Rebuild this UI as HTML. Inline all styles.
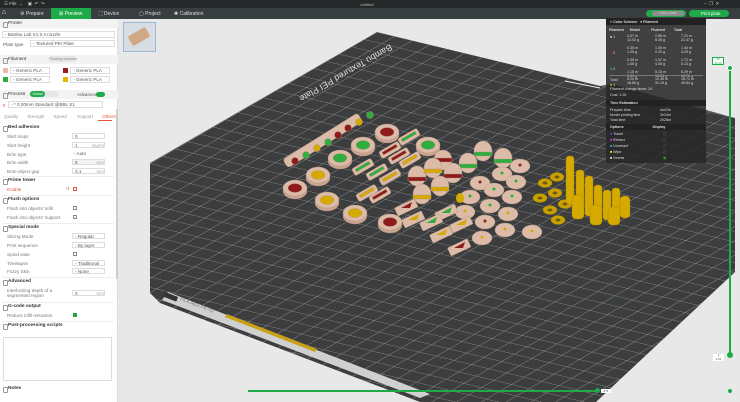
<!DOCTYPE html>
<html><head><meta charset="utf-8"><style>
*{margin:0;padding:0;box-sizing:border-box}
body{width:740px;height:402px;overflow:hidden;background:#e8e8e8;font-family:"Liberation Sans",sans-serif;position:relative}
.a{position:absolute;white-space:nowrap}
#lp{position:absolute;left:0;top:19px;width:118px;height:383px;background:#fff;border-right:1px solid #ddd;font-size:4.6px;color:#555}
.h{position:absolute;left:0;width:116px;font-weight:bold;color:#333;font-size:4.8px;padding-left:8px}
.h:before{content:"";position:absolute;left:2.5px;top:1px;width:3.5px;height:3.5px;border:0.5px solid #999;border-radius:1px}
.l{position:absolute;left:7px;color:#777}
.f{position:absolute;left:72px;width:33px;height:6px;border:0.5px solid #ddd;padding-left:2px;line-height:5.5px;color:#555}
.cb{position:absolute;left:73px;width:4px;height:4px;border:0.6px solid #888}
.sep{position:absolute;left:2px;width:112px;height:1px;background:#eee}
</style></head><body>
<div class="a" style="left:0;top:0;width:740px;height:8px;background:#26292a"></div>
<div class="a" style="left:4px;top:1px;font-size:4.5px;color:#ccc">☰ File &nbsp;⌄ &nbsp;&nbsp;&nbsp;▣ &nbsp;↶ &nbsp;↷</div>
<div class="a" style="left:360px;top:1.5px;font-size:4px;color:#bbb">Untitled</div>
<div class="a" style="left:704px;top:1px;font-size:4.5px;color:#ccc">–&nbsp;&nbsp;❐&nbsp;&nbsp;✕</div>
<div class="a" style="left:0;top:8px;width:740px;height:11px;background:#383e40"></div>
<div class="a" style="left:51px;top:8px;width:40px;height:11px;background:#1faa4a"></div>
<div class="a" style="left:2px;top:9px;font-size:7px;color:#eee">⌂</div>
<div class="a" style="left:20px;top:10.5px;font-size:5px;color:#ddd">⚙ Prepare</div>
<div class="a" style="left:59px;top:10.5px;font-size:5px;color:#fff">⊞ Preview</div>
<div class="a" style="left:99px;top:10.5px;font-size:5px;color:#ddd">⛶ Device</div>
<div class="a" style="left:139px;top:10.5px;font-size:5px;color:#ddd">▢ Project</div>
<div class="a" style="left:174px;top:10.5px;font-size:5px;color:#ddd">✺ Calibration</div>
<div class="a" style="left:646px;top:10px;width:40px;height:7px;background:#1faa4a;border-radius:4px"></div>
<div class="a" style="left:652px;top:11px;width:32px;height:5px;background:#8a8f8c;border-radius:3px;font-size:3.8px;color:#ccc;text-align:center;line-height:5px">Slice plate</div>
<div class="a" style="left:689px;top:10px;width:40px;height:7px;background:#1faa4a;border-radius:4px;font-size:4.3px;color:#fff;line-height:7px;padding-left:12px">Print plate</div>

<svg class="a" style="left:119px;top:19px" width="621" height="383" viewBox="119 19 621 383">
<defs>
<pattern id="g" width="1" height="1" patternUnits="userSpaceOnUse" patternTransform="matrix(17.5,4.2,-12.6,7.3,377,32)">
<path d="M0 0H1M0 0V1" stroke="#9a9a9a" stroke-width="0.06" fill="none"/>
</pattern>
<clipPath id="bc"><polygon points="377,32 600,86 612,84 735,118 735,272 596,402 420,402 160,303 150,293 150,163"/></clipPath>
</defs>
<polygon points="377,32 600,86 612,84 735,118 735,272 596,402 420,402 160,303 150,293 150,163" fill="#3c3d3e"/>
<rect x="119" y="19" width="621" height="383" fill="url(#g)" clip-path="url(#bc)"/>
<polygon points="162,300 420,398 430,394 168,292" fill="#cfd0d0"/>
<polygon points="227,314 317,349 315,352 225,317" fill="#c8a116"/>
<rect x="165" y="292" width="14" height="5" fill="#333" transform="rotate(21 165 292)"/>
<text x="180" y="300" font-size="5" fill="#777" transform="rotate(21 180 300)" font-style="italic">PLA ABS PETG</text>
<text x="0" y="0" font-size="9" fill="#ddd" transform="translate(390,44) rotate(150)">Bambu Textured PEI Plate</text>
<line x1="565" y1="81" x2="600" y2="88" stroke="#eee" stroke-width="1"/>
<g stroke="#b08f7c" stroke-width="0.4">
<g fill="#dcbca8">
<rect x="288" y="158" width="88" height="10" rx="3" transform="rotate(-32 288 168)"/>
</g>
<g>
<circle cx="295" cy="161" r="3.5" fill="#8e1b1b"/><circle cx="306" cy="155" r="3.5" fill="#2fae3f"/><circle cx="317" cy="148" r="3.5" fill="#d4aa00"/><circle cx="328" cy="142" r="3.5" fill="#2fae3f"/><circle cx="338" cy="135" r="3.5" fill="#8e1b1b"/><circle cx="348" cy="128" r="3.5" fill="#8e1b1b"/><circle cx="359" cy="122" r="3.5" fill="#d4aa00"/><circle cx="370" cy="115" r="3.5" fill="#2fae3f"/>
</g>
<g>
<ellipse cx="387" cy="135" rx="12" ry="8" fill="#c9a48f"/><ellipse cx="387" cy="132" rx="12" ry="8" fill="#dcbca8"/><ellipse cx="387" cy="132" rx="7" ry="4.5" fill="#8e1b1b"/>
<ellipse cx="363" cy="148" rx="12" ry="8" fill="#c9a48f"/><ellipse cx="363" cy="145" rx="12" ry="8" fill="#dcbca8"/><ellipse cx="363" cy="145" rx="7" ry="4.5" fill="#2fae3f"/>
<ellipse cx="428" cy="148" rx="12" ry="8" fill="#c9a48f"/><ellipse cx="428" cy="145" rx="12" ry="8" fill="#dcbca8"/><ellipse cx="428" cy="145" rx="7" ry="4.5" fill="#2fae3f"/>
<ellipse cx="340" cy="161" rx="12" ry="8" fill="#c9a48f"/><ellipse cx="340" cy="158" rx="12" ry="8" fill="#dcbca8"/><ellipse cx="340" cy="158" rx="7" ry="4.5" fill="#2fae3f"/>
<ellipse cx="318" cy="178" rx="12" ry="8" fill="#c9a48f"/><ellipse cx="318" cy="175" rx="12" ry="8" fill="#dcbca8"/><ellipse cx="318" cy="175" rx="7" ry="4.5" fill="#d4aa00"/>
<ellipse cx="295" cy="191" rx="12" ry="8" fill="#c9a48f"/><ellipse cx="295" cy="188" rx="12" ry="8" fill="#dcbca8"/><ellipse cx="295" cy="188" rx="7" ry="4.5" fill="#8e1b1b"/>
<ellipse cx="327" cy="203" rx="12" ry="8" fill="#c9a48f"/><ellipse cx="327" cy="200" rx="12" ry="8" fill="#dcbca8"/><ellipse cx="327" cy="200" rx="7" ry="4.5" fill="#d4aa00"/>
<ellipse cx="355" cy="216" rx="12" ry="8" fill="#c9a48f"/><ellipse cx="355" cy="213" rx="12" ry="8" fill="#dcbca8"/><ellipse cx="355" cy="213" rx="7" ry="4.5" fill="#d4aa00"/>
<ellipse cx="390" cy="225" rx="12" ry="8" fill="#c9a48f"/><ellipse cx="390" cy="222" rx="12" ry="8" fill="#dcbca8"/><ellipse cx="390" cy="222" rx="7" ry="4.5" fill="#8e1b1b"/>
</g>
<g>
<rect x="398" y="133" width="22" height="8" rx="2" fill="#dcbca8" transform="rotate(-30 409 137)"/><rect x="401" y="135" width="16" height="3" fill="#2fae3f" transform="rotate(-30 409 137)"/>
<rect x="379" y="146" width="22" height="8" rx="2" fill="#dcbca8" transform="rotate(-30 390 150)"/><rect x="382" y="148" width="16" height="3" fill="#8e1b1b" transform="rotate(-30 390 150)"/>
<rect x="388" y="152" width="22" height="8" rx="2" fill="#dcbca8" transform="rotate(-30 399 156)"/><rect x="391" y="154" width="16" height="3" fill="#8e1b1b" transform="rotate(-30 399 156)"/>
<rect x="399" y="156" width="22" height="8" rx="2" fill="#dcbca8" transform="rotate(-30 410 160)"/><rect x="402" y="158" width="16" height="3" fill="#d4aa00" transform="rotate(-30 410 160)"/>
<rect x="352" y="163" width="22" height="8" rx="2" fill="#dcbca8" transform="rotate(-30 363 167)"/><rect x="355" y="165" width="16" height="3" fill="#2fae3f" transform="rotate(-30 363 167)"/>
<rect x="366" y="168" width="22" height="8" rx="2" fill="#dcbca8" transform="rotate(-30 377 172)"/><rect x="369" y="170" width="16" height="3" fill="#2fae3f" transform="rotate(-30 377 172)"/>
<rect x="379" y="173" width="22" height="8" rx="2" fill="#dcbca8" transform="rotate(-30 390 177)"/><rect x="382" y="175" width="16" height="3" fill="#d4aa00" transform="rotate(-30 390 177)"/>
<rect x="356" y="189" width="22" height="8" rx="2" fill="#dcbca8" transform="rotate(-30 367 193)"/><rect x="359" y="191" width="16" height="3" fill="#d4aa00" transform="rotate(-30 367 193)"/>
<rect x="369" y="191" width="22" height="8" rx="2" fill="#dcbca8" transform="rotate(-30 380 195)"/><rect x="372" y="193" width="16" height="3" fill="#8e1b1b" transform="rotate(-30 380 195)"/>
</g>
<g>
<ellipse cx="443" cy="160" rx="9" ry="10" fill="#dcbca8"/><rect x="434" y="158" width="18" height="4" fill="#8e1b1b"/>
<ellipse cx="483" cy="151" rx="9" ry="10" fill="#dcbca8"/><rect x="474" y="152" width="18" height="4" fill="#2fae3f"/>
<ellipse cx="503" cy="158" rx="9" ry="10" fill="#dcbca8"/><rect x="494" y="159" width="18" height="4" fill="#2fae3f"/>
<ellipse cx="468" cy="163" rx="9" ry="10" fill="#dcbca8"/><rect x="459" y="164" width="18" height="4" fill="#2fae3f"/>
<ellipse cx="453" cy="173" rx="9" ry="10" fill="#dcbca8"/><rect x="444" y="174" width="18" height="4" fill="#8e1b1b"/>
<ellipse cx="417" cy="176" rx="9" ry="10" fill="#dcbca8"/><rect x="408" y="177" width="18" height="4" fill="#8e1b1b"/>
<ellipse cx="433" cy="168" rx="9" ry="10" fill="#dcbca8"/><rect x="424" y="169" width="18" height="4" fill="#d4aa00"/>
<ellipse cx="440" cy="186" rx="9" ry="10" fill="#dcbca8"/><rect x="431" y="187" width="18" height="4" fill="#d4aa00"/>
<ellipse cx="422" cy="194" rx="9" ry="10" fill="#dcbca8"/><rect x="413" y="195" width="18" height="4" fill="#d4aa00"/>
</g>
<g fill="#dcbca8">
<ellipse cx="480" cy="183" rx="10" ry="7"/><ellipse cx="502" cy="174" rx="10" ry="7"/><ellipse cx="520" cy="166" rx="10" ry="7"/>
<ellipse cx="470" cy="197" rx="10" ry="7"/><ellipse cx="494" cy="190" rx="10" ry="7"/><ellipse cx="516" cy="182" rx="10" ry="7"/>
<ellipse cx="465" cy="212" rx="10" ry="7"/><ellipse cx="490" cy="206" rx="10" ry="7"/><ellipse cx="512" cy="197" rx="10" ry="7"/>
<ellipse cx="485" cy="222" rx="10" ry="7"/><ellipse cx="508" cy="214" rx="10" ry="7"/>
<ellipse cx="482" cy="238" rx="10" ry="7"/><ellipse cx="505" cy="230" rx="10" ry="7"/><ellipse cx="532" cy="232" rx="10" ry="7"/>
<rect x="435" y="208" width="22" height="9" rx="1" transform="rotate(-25 446 212)"/><rect x="450" y="220" width="22" height="9" rx="1" transform="rotate(-25 461 224)"/>
<rect x="430" y="230" width="22" height="9" rx="1" transform="rotate(-25 441 234)"/><rect x="448" y="243" width="22" height="9" rx="1" transform="rotate(-25 459 247)"/>
<rect x="395" y="203" width="22" height="9" rx="1" transform="rotate(-25 406 207)"/><rect x="402" y="215" width="22" height="9" rx="1" transform="rotate(-25 413 219)"/>
<rect x="420" y="218" width="22" height="9" rx="1" transform="rotate(-25 431 222)"/>
</g>
<g stroke="none">
<circle cx="480" cy="182" r="1.5" fill="#8e1b1b"/><circle cx="502" cy="173" r="1.5" fill="#2fae3f"/><circle cx="520" cy="165" r="1.5" fill="#8e1b1b"/>
<circle cx="470" cy="196" r="1.5" fill="#2fae3f"/><circle cx="494" cy="189" r="1.5" fill="#2fae3f"/><circle cx="516" cy="181" r="1.5" fill="#2fae3f"/>
<circle cx="465" cy="211" r="1.5" fill="#d4aa00"/><circle cx="490" cy="205" r="1.5" fill="#2fae3f"/><circle cx="512" cy="196" r="1.5" fill="#2fae3f"/>
<circle cx="485" cy="221" r="1.5" fill="#8e1b1b"/><circle cx="508" cy="213" r="1.5" fill="#d4aa00"/>
<circle cx="482" cy="237" r="1.5" fill="#d4aa00"/><circle cx="505" cy="229" r="1.5" fill="#d4aa00"/><circle cx="532" cy="231" r="1.5" fill="#d4aa00"/>
<polygon points="441,213 452,207 450,213" fill="#2fae3f"/><polygon points="456,225 467,219 465,225" fill="#d4aa00"/><polygon points="436,235 447,229 445,235" fill="#d4aa00"/><polygon points="454,248 465,242 463,248" fill="#8e1b1b"/>
<polygon points="401,208 412,202 410,208" fill="#8e1b1b"/><polygon points="408,220 419,214 417,220" fill="#d4aa00"/><polygon points="426,223 437,217 435,223" fill="#2fae3f"/>
<ellipse cx="460" cy="198" rx="4" ry="5" fill="#d4aa00"/>
</g>
<g fill="#c9a000" stroke="#a98600">
<ellipse cx="545" cy="183" rx="7" ry="4.5"/><ellipse cx="557" cy="177" rx="7" ry="4.5"/><ellipse cx="540" cy="198" rx="7" ry="4.5"/><ellipse cx="555" cy="193" rx="7" ry="4.5"/><ellipse cx="550" cy="210" rx="7" ry="4.5"/><ellipse cx="565" cy="204" rx="7" ry="4.5"/><ellipse cx="558" cy="220" rx="7" ry="4.5"/>
</g>
<g fill="#6b5a10" stroke="none">
<ellipse cx="545" cy="183" rx="2.5" ry="1.5"/><ellipse cx="557" cy="177" rx="2.5" ry="1.5"/><ellipse cx="540" cy="198" rx="2.5" ry="1.5"/><ellipse cx="555" cy="193" rx="2.5" ry="1.5"/><ellipse cx="550" cy="210" rx="2.5" ry="1.5"/><ellipse cx="565" cy="204" rx="2.5" ry="1.5"/><ellipse cx="558" cy="220" rx="2.5" ry="1.5"/>
</g>
<g fill="#d4aa00" stroke="#a98600">
<rect x="566" y="156" width="8" height="48" rx="3"/><rect x="576" y="170" width="8" height="40" rx="3"/><rect x="585" y="176" width="8" height="40" rx="3"/><rect x="594" y="185" width="8" height="30" rx="3"/><rect x="603" y="190" width="8" height="30" rx="3"/><rect x="612" y="188" width="8" height="28" rx="3"/><rect x="620" y="196" width="10" height="22" rx="4"/>
<rect x="572" y="195" width="12" height="24" rx="4"/><rect x="590" y="205" width="12" height="20" rx="4"/><rect x="608" y="207" width="12" height="18" rx="4"/>
</g>
</g>
</svg>
<div class="a" style="left:123px;top:22px;width:33px;height:30px;border:1px solid #9cb8d8;background:#d8dde3"></div>
<div class="a" style="left:129px;top:31px;width:20px;height:11px;background:#cfa986;transform:rotate(-30deg);border-radius:2px"></div>

<div class="a" style="left:606px;top:18px;width:100px;height:145px;background:rgba(40,40,40,0.88);color:#ddd;font-size:3.6px">
<div class="a" style="left:0;top:0;width:100px;height:7px;background:#222"></div>
<div class="a" style="left:4px;top:1.5px;font-weight:bold">≡ Color Scheme &nbsp;&nbsp;▾ Filament</div>
<div class="a" style="left:3px;top:10px;font-weight:bold">Filament&nbsp;&nbsp;&nbsp;&nbsp;&nbsp;&nbsp;Model&nbsp;&nbsp;&nbsp;&nbsp;&nbsp;&nbsp;&nbsp;&nbsp;&nbsp;&nbsp;&nbsp;Flushed&nbsp;&nbsp;&nbsp;&nbsp;&nbsp;&nbsp;&nbsp;&nbsp;&nbsp;Total</div>
<div class="a" style="left:4px;top:17px;line-height:4px"><span style="color:#e8b0a0">■</span> 1<br><br><br><br><span style="color:#9a2020">■</span> 2<br><br><br><br><span style="color:#2fae3f">■</span> 3<br><br><br><br><span style="color:#d4aa00">■</span> 4</div>
<div class="a" style="left:21px;top:16px;line-height:4px">4.37 m<br>13.02 g<br><br>0.35 m<br>1.05 g<br><br>0.35 m<br>1.05 g<br><br>1.15 m<br>3.50 g</div>
<div class="a" style="left:49px;top:16px;line-height:4px">2.85 m<br>8.45 g<br><br>1.08 m<br>0.20 g<br><br>1.37 m<br>4.08 g<br><br>5.15 m<br>15.28 g</div>
<div class="a" style="left:75px;top:16px;line-height:4px">7.21 m<br>21.47 g<br><br>1.44 m<br>4.29 g<br><br>1.72 m<br>5.13 g<br><br>6.29 m<br>18.78 g</div>
<div class="a" style="left:3px;top:57px;width:94px;height:0.5px;background:#777"></div>
<div class="a" style="left:4px;top:60px">Total</div>
<div class="a" style="left:21px;top:59px;line-height:4px">6.24 m<br>18.65 g</div>
<div class="a" style="left:49px;top:59px;line-height:4px">10.45 m<br>31.19 g</div>
<div class="a" style="left:75px;top:59px;line-height:4px">16.71 m<br>49.84 g</div>
<div class="a" style="left:4px;top:69px">Filament change times: 24</div>
<div class="a" style="left:4px;top:75px">Cost: 1.00</div>
<div class="a" style="left:0;top:82px;width:100px;height:6px;background:#222"></div>
<div class="a" style="left:4px;top:83px;font-weight:bold">Time Estimation</div>
<div class="a" style="left:4px;top:90px;line-height:5px">Prepare time<br>Model printing time<br>Total time</div>
<div class="a" style="left:54px;top:90px;line-height:5px">4m23s<br>2h24m<br>2h28m</div>
<div class="a" style="left:0;top:106px;width:100px;height:6px;background:#222"></div>
<div class="a" style="left:4px;top:107px;font-weight:bold">Options&nbsp;&nbsp;&nbsp;&nbsp;&nbsp;&nbsp;&nbsp;&nbsp;&nbsp;&nbsp;&nbsp;&nbsp;&nbsp;&nbsp;&nbsp;&nbsp;&nbsp;&nbsp;&nbsp;&nbsp;&nbsp;&nbsp;&nbsp;&nbsp;&nbsp;&nbsp;&nbsp;&nbsp;&nbsp;Display</div>
<div class="a" style="left:4px;top:113px;line-height:6px"><span style="color:#3355dd">■</span> Travel<br><span style="color:#cc33cc">■</span> Retract<br><span style="color:#44aadd">■</span> Unretract<br><span style="color:#eeee22">■</span> Wipe<br><span style="color:#eee">■</span> Seams</div>
<div class="a" style="left:57px;top:113px;line-height:6px;color:#777">▢<br>▢<br>▢<br>▢<br><span style="color:#2fae3f">▣</span></div>
</div>
<div class="a" style="left:729px;top:67px;width:2px;height:288px;background:#1faa4a"></div>
<div class="a" style="left:727px;top:65px;width:6px;height:6px;border-radius:50%;background:#1faa4a;border:1px solid #fff"></div>
<div class="a" style="left:727px;top:352px;width:6px;height:6px;border-radius:50%;background:#1faa4a"></div>
<div class="a" style="left:712px;top:57px;width:12px;height:8px;background:#fff;border:0.5px solid #1faa4a;font-size:2.8px;color:#1faa4a;text-align:center;line-height:3.5px">30<br>16.49</div>
<div class="a" style="left:713px;top:354px;width:11px;height:7px;background:#fff;font-size:2.8px;color:#555;text-align:center;line-height:3.5px">1<br>0.24</div>
<div class="a" style="left:248px;top:390px;width:350px;height:2px;background:#1faa4a"></div>
<div class="a" style="left:595px;top:388px;width:5px;height:5px;border-radius:50%;background:#1faa4a"></div>
<div class="a" style="left:601px;top:389px;width:10px;height:4px;background:#fff;font-size:2.8px;color:#555;text-align:center">874</div>
<div class="a" style="left:728px;top:389px;width:4px;height:4px;border-radius:50%;background:#1faa4a"></div>

<div id="lp">
<div class="a" style="left:0;top:0;width:118px;height:9px;background:#f3f3f3"></div>
<div class="h" style="top:2px;font-weight:normal">Printer</div>
<div class="a" style="left:2px;top:12px;width:113px;height:7px;border:0.5px solid #ddd;padding-left:2px;line-height:6px">◦ Bambu Lab X1 0.4 nozzle</div>
<div class="a" style="left:3px;top:23px">Plate type</div>
<div class="a" style="left:30px;top:21px;width:85px;height:7px;border:0.5px solid #ddd;padding-left:2px;line-height:6px">◦ Textured PEI Plate</div>
<div class="a" style="left:0;top:36px;width:118px;height:9px;background:#f3f3f3"></div>
<div class="h" style="top:38px;font-weight:normal">Filament</div>
<div class="a" style="left:49px;top:37px;width:28px;height:6px;background:#e6e6e6;border-radius:3px;font-size:3.5px;text-align:center;line-height:6px;color:#888">Flushing volumes</div>
<div class="a" style="left:3px;top:49px;width:5px;height:5px;background:#f0b8a8"></div>
<div class="a" style="left:10px;top:48px;width:40px;height:7px;border:0.5px solid #ddd;padding-left:2px;line-height:6px">◦ Generic PLA</div>
<div class="a" style="left:63px;top:49px;width:5px;height:5px;background:#9a2020"></div>
<div class="a" style="left:70px;top:48px;width:40px;height:7px;border:0.5px solid #ddd;padding-left:2px;line-height:6px">◦ Generic PLA</div>
<div class="a" style="left:3px;top:58px;width:5px;height:5px;background:#2fae3f"></div>
<div class="a" style="left:10px;top:57px;width:40px;height:7px;border:0.5px solid #ddd;padding-left:2px;line-height:6px">◦ Generic PLA</div>
<div class="a" style="left:63px;top:58px;width:5px;height:5px;background:#e8b800"></div>
<div class="a" style="left:70px;top:57px;width:40px;height:7px;border:0.5px solid #ddd;padding-left:2px;line-height:6px">◦ Generic PLA</div>
<div class="a" style="left:0;top:71px;width:118px;height:9px;background:#f3f3f3"></div>
<div class="h" style="top:73px;font-weight:normal">Process</div>
<div class="a" style="left:30px;top:72px;width:29px;height:6px;background:#e6e6e6;border-radius:3px"></div>
<div class="a" style="left:30px;top:72px;width:15px;height:6px;background:#1faa4a;border-radius:3px;font-size:3.5px;color:#fff;text-align:center;line-height:6px">Global</div>
<div class="a" style="left:77px;top:73px">Advanced</div>
<div class="a" style="left:96px;top:73px;width:9px;height:4.5px;background:#1faa4a;border-radius:3px"></div>
<div class="a" style="left:2px;top:84px;color:#e0573a">↯</div>
<div class="a" style="left:8px;top:82px;width:95px;height:7px;border:0.5px solid #ddd;padding-left:2px;line-height:6px">◦ * 0.20mm Standard @BBL X1</div>
<div class="a" style="left:4px;top:95px;color:#999">Quality&nbsp;&nbsp;&nbsp;&nbsp;&nbsp;&nbsp;&nbsp;Strength&nbsp;&nbsp;&nbsp;&nbsp;&nbsp;&nbsp;&nbsp;Speed&nbsp;&nbsp;&nbsp;&nbsp;&nbsp;&nbsp;&nbsp;&nbsp;Support&nbsp;&nbsp;&nbsp;&nbsp;&nbsp;&nbsp;&nbsp;<span style="color:#e0573a">Others</span></div>
<div class="a" style="left:98px;top:101px;width:14px;height:0.8px;background:#e0573a"></div>
<div class="h" style="top:106px">Bed adhesion</div>
<div class="l" style="top:115px">Skirt loops</div><div class="f" style="top:114px">0</div>
<div class="l" style="top:124px">Skirt height</div><div class="f" style="top:123px">1 <span style="float:right;color:#aaa">layers</span></div>
<div class="l" style="top:133px">Brim type</div><div class="f" style="top:132px;border:none">◦ Auto</div>
<div class="l" style="top:141px">Brim width</div><div class="f" style="top:140px;background:#f3f3f3">5 <span style="float:right;color:#aaa">mm</span></div>
<div class="l" style="top:150px">Brim-object gap</div><div class="f" style="top:149px">0.1 <span style="float:right;color:#aaa">mm</span></div>
<div class="sep" style="top:157px"></div>
<div class="h" style="top:159px">Prime tower</div>
<div class="l" style="top:168px;color:#e0573a">Enable</div><div class="a" style="left:66px;top:167px;color:#e0573a">↺</div><div class="cb" style="top:168px;border-color:#e0573a"></div>
<div class="sep" style="top:176px"></div>
<div class="h" style="top:178px">Flush options</div>
<div class="l" style="top:187px">Flush into objects' infill</div><div class="cb" style="top:187px"></div>
<div class="l" style="top:196px">Flush into objects' support</div><div class="cb" style="top:196px"></div>
<div class="sep" style="top:204px"></div>
<div class="h" style="top:206px">Special mode</div>
<div class="l" style="top:215px">Slicing Mode</div><div class="f" style="top:214px">◦ Regular</div>
<div class="l" style="top:224px">Print sequence</div><div class="f" style="top:223px">◦ By layer</div>
<div class="l" style="top:233px">Spiral vase</div><div class="cb" style="top:233px"></div>
<div class="l" style="top:242px">Timelapse</div><div class="f" style="top:241px">◦ Traditional</div>
<div class="l" style="top:250px">Fuzzy Skin</div><div class="f" style="top:249px">◦ None</div>
<div class="sep" style="top:258px"></div>
<div class="h" style="top:260px">Advanced</div>
<div class="l" style="top:269px;line-height:5px">Interlocking depth of a<br>segmented region</div><div class="f" style="top:271px">0 <span style="float:right;color:#aaa">mm</span></div>
<div class="sep" style="top:283px"></div>
<div class="h" style="top:285px">G-code output</div>
<div class="l" style="top:294px">Reduce infill retraction</div><div class="cb" style="top:294px;background:#1faa4a;border-color:#1faa4a"></div>
<div class="sep" style="top:302px"></div>
<div class="h" style="top:304px">Post-processing scripts</div>
<div class="a" style="left:3px;top:318px;width:109px;height:44px;border:0.5px solid #ddd"></div>
<div class="h" style="top:367px">Notes</div>
<div class="a" style="left:116px;top:90px;width:2px;height:170px;background:#ccc"></div>
</div>
</body></html>
